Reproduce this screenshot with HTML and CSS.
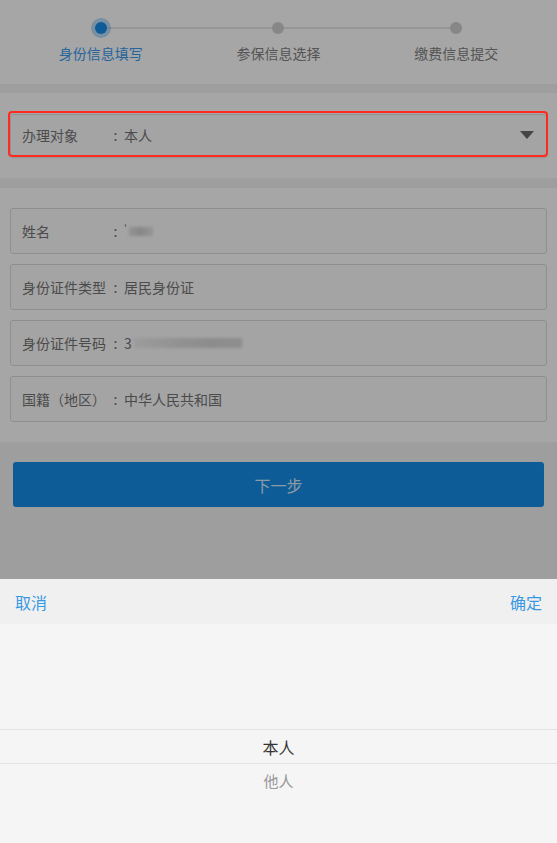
FILE: index.html
```html
<!DOCTYPE html>
<html lang="zh-CN">
<head>
<meta charset="utf-8">
<title>身份信息填写</title>
<link rel="stylesheet" href="styles.css">
</head>
<body>
<div class="page">
  <div class="steps">
    <div class="step active">
      <span class="dot"></span>
      <span class="step-label">身份信息填写</span>
    </div>
    <div class="step">
      <span class="dot"></span>
      <span class="step-label">参保信息选择</span>
    </div>
    <div class="step last">
      <span class="dot"></span>
      <span class="step-label">缴费信息提交</span>
    </div>
  </div>

  <div class="section select-section">
    <div class="field select">
      <span class="label">办理对象</span>
      <span class="colon">:</span>
      <span class="value">本人</span>
      <span class="caret"></span>
    </div>
  </div>

  <div class="section fields">
    <div class="field">
      <span class="label">姓名</span>
      <span class="colon">:</span>
      <span class="value"><span class="mark">'</span><span class="blur blur-name"></span></span>
    </div>
    <div class="field">
      <span class="label">身份证件类型</span>
      <span class="colon">:</span>
      <span class="value">居民身份证</span>
    </div>
    <div class="field">
      <span class="label">身份证件号码</span>
      <span class="colon">:</span>
      <span class="value">3<span class="blur blur-id"></span></span>
    </div>
    <div class="field">
      <span class="label">国籍（地区）</span>
      <span class="colon">:</span>
      <span class="value">中华人民共和国</span>
    </div>
  </div>

  <div class="actions">
    <button class="next-btn" type="button">下一步</button>
  </div>
</div>

<div class="mask"></div>

<div class="picker">
  <div class="picker-head">
    <span class="picker-btn">取消</span>
    <span class="picker-btn">确定</span>
  </div>
  <div class="picker-body">
    <div class="picker-item selected">本人</div>
    <div class="picker-item">他人</div>
  </div>
</div>
</body>
</html>
```

FILE: styles.css
```css
* { box-sizing: border-box; }

html, body {
  margin: 0;
  padding: 0;
}

body {
  background: #f3f3f3;
  font-family: "Noto Sans CJK SC", "Noto Sans", sans-serif;
  font-size: 14px;
  color: #747474;
  height: 843px;
  overflow: hidden;
}

.page {
  background: #f3f3f3;
}

/* steps */
.steps {
  display: grid;
  grid-template-columns: repeat(3, 1fr);
  padding: 18px 12px 0;
  height: 84px;
  background: #fff;
}

.step {
  position: relative;
  display: flex;
  flex-direction: column;
  align-items: center;
}

.step::after {
  content: "";
  position: absolute;
  top: 9px;
  left: 50%;
  width: 100%;
  height: 2px;
  background: #e6e6e6;
}

.step.last::after { display: none; }

.dot {
  position: relative;
  z-index: 1;
  width: 20px;
  height: 20px;
  display: flex;
  align-items: center;
  justify-content: center;
}

.dot::before {
  content: "";
  width: 12px;
  height: 12px;
  border-radius: 50%;
  background: #d0d0d0;
}

.step.active .dot {
  border-radius: 50%;
  background: rgba(22, 142, 232, 0.3);
}

.step.active .dot::before {
  background: #168ee8;
}

.step-label {
  margin-top: 5px;
  line-height: 20px;
  font-size: 14px;
  color: #838383;
}

.step.active .step-label {
  color: #3a9cf0;
}

/* sections */
.section {
  background: #fff;
}

.select-section {
  margin-top: 9px;
  padding: 21px 10px 22px;
}

.fields {
  margin-top: 10px;
  padding: 20px 10px 20px;
  display: flex;
  flex-direction: column;
  gap: 10px;
}

.field {
  display: flex;
  align-items: center;
  height: 46px;
  padding-left: 11px;
  border: 1px solid #dcdcdc;
  border-radius: 3px;
  background: #fcfcfc;
  color: #747474;
}

.select {
  position: relative;
  height: 42px;
  border-color: #e2e2e2;
  box-shadow: 0 2px 2px rgba(0, 0, 0, 0.12);
}

.select::after {
  content: "";
  position: absolute;
  z-index: 12;
  top: -4px;
  left: -3px;
  right: -2px;
  bottom: -2px;
  border: 2px solid #ff2a1f;
  border-radius: 4px;
}

.label {
  width: 85px;
  flex: none;
}

.colon {
  width: 17px;
  flex: none;
  text-align: center;
}

.value {
  flex: 1;
  display: flex;
  align-items: center;
}

.caret {
  width: 0;
  height: 0;
  margin-right: 12px;
  border-left: 7px solid transparent;
  border-right: 7px solid transparent;
  border-top: 8px solid #6a6a6a;
}

.mark {
  font-size: 10px;
  margin-top: -6px;
  margin-right: 2px;
}

.blur {
  display: inline-block;
  filter: blur(1.5px);
}

.blur-name {
  width: 24px;
  height: 9px;
  background: linear-gradient(90deg, #e2e2e2 0%, #cfcfcf 45%, #e6e6e6 100%);
}

.blur-id {
  width: 108px;
  height: 10px;
  margin-left: 2px;
  background: linear-gradient(90deg, #f0f0f0 0%, #e0e0e0 40%, #d8d8d8 70%, #d9d9d9 100%);
}

/* actions */
.actions {
  padding: 20px 13px 0;
  height: 401px;
}

.next-btn {
  display: block;
  width: 100%;
  height: 45px;
  border: none;
  border-radius: 3px;
  background: #168ee8;
  color: #d8edff;
  font-family: inherit;
  font-size: 16px;
}

/* mask */
.mask {
  position: fixed;
  inset: 0;
  z-index: 10;
  background: rgba(0, 0, 0, 0.35);
}

/* picker */
.picker {
  position: fixed;
  left: 0;
  right: 0;
  bottom: 0;
  height: 264px;
  z-index: 11;
  background: #f5f5f5;
}

.picker-head {
  height: 45px;
  background: #f0f0f0;
  display: flex;
  align-items: center;
  justify-content: space-between;
  padding: 0 15px;
}

.picker-btn {
  font-size: 16px;
  color: #3a98e3;
}

.picker-body {
  padding-top: 105px;
}

.picker-item {
  height: 35px;
  line-height: 34px;
  text-align: center;
  font-size: 15px;
  color: #999;
}

.picker-item.selected {
  color: #333;
  font-size: 16px;
  border-top: 1px solid #e2e2e2;
  border-bottom: 1px solid #e2e2e2;
}
```
